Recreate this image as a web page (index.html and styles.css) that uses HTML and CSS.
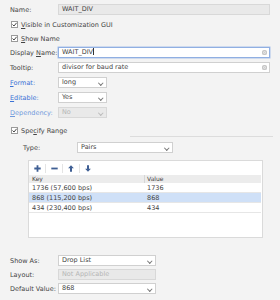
FILE: index.html
```html
<!DOCTYPE html>
<html lang="en">
<head>
    <meta charset="UTF-8">
    <title>Variable Properties</title>
    <link rel="stylesheet" href="styles.css">
</head>
<body>
    <div class="form">
        <div class="row">
            <span class="lbl">Name:</span>
            <div class="field disabled">WAIT_DIV</div>
        </div>
        <div class="row check-row">
            <span class="check"><svg width="7" height="7" viewBox="0 0 7 7"><path d="M1.5 3.5 L3 5 L5.6 1.8" fill="none" stroke="#444" stroke-width="1"/></svg></span>
            <span><u>V</u>isible in Customization GUI</span>
        </div>
        <div class="row check-row tight">
            <span class="check"><svg width="7" height="7" viewBox="0 0 7 7"><path d="M1.5 3.5 L3 5 L5.6 1.8" fill="none" stroke="#444" stroke-width="1"/></svg></span>
            <span><u>S</u>how Name</span>
        </div>
        <div class="row tight">
            <span class="lbl">Display <u>N</u>ame:</span>
            <div class="field focus">WAIT_DIV<span class="caret"></span><span class="clear"></span></div>
        </div>
        <div class="row">
            <span class="lbl">Tooltip:</span>
            <div class="field">divisor for baud rate<span class="clear"></span></div>
        </div>
        <div class="row">
            <span class="lbl link"><u>F</u>ormat:</span>
            <div class="combo small">long<span class="chev"></span></div>
        </div>
        <div class="row">
            <span class="lbl link"><u>E</u>ditable:</span>
            <div class="combo small">Yes<span class="chev"></span></div>
        </div>
        <div class="row">
            <span class="lbl link dim"><u>D</u>ependency:</span>
            <div class="combo small disabled">No<span class="chev"></span></div>
        </div>

        <div class="row check-row range-head">
            <span class="check"><svg width="7" height="7" viewBox="0 0 7 7"><path d="M1.5 3.5 L3 5 L5.6 1.8" fill="none" stroke="#444" stroke-width="1"/></svg></span>
            <span>Spe<u>c</u>ify Range</span>
        </div>
        <div class="separator"></div>

        <div class="row type-row">
            <span class="lbl wide">Type:</span>
            <div class="combo mid">Pairs<span class="chev"></span></div>
        </div>

        <div class="range-panel">
            <div class="toolbar">
                <span class="tool"><svg width="7" height="7" viewBox="0 0 7 7"><path d="M3.5 0.3 V6.7 M0.3 3.5 H6.7" stroke="#3f5f94" stroke-width="1.8"/></svg></span>
                <span class="tool"><svg width="7" height="7" viewBox="0 0 7 7"><path d="M0.3 3.5 H6.7" stroke="#3f5f94" stroke-width="1.8"/></svg></span>
                <span class="tool"><svg width="6" height="7" viewBox="0 0 6 7"><path d="M3 0.2 L5.9 3.3 H4 V6.8 H2 V3.3 H0.1 Z" fill="#3f5f94"/></svg></span>
                <span class="tool last"><svg width="6" height="7" viewBox="0 0 6 7"><path d="M3 6.8 L5.9 3.7 H4 V0.2 H2 V3.7 H0.1 Z" fill="#3f5f94"/></svg></span>
            </div>
            <div class="grid-head">
                <span class="col-key">Key</span>
                <span class="col-val">Value</span>
            </div>
            <div class="grid-row">
                <span class="col-key">1736 (57,600 bps)</span>
                <span class="col-val">1736</span>
            </div>
            <div class="grid-row selected">
                <span class="col-key">868 (115,200 bps)</span>
                <span class="col-val">868</span>
            </div>
            <div class="grid-row">
                <span class="col-key">434 (230,400 bps)</span>
                <span class="col-val">434</span>
            </div>
        </div>

        <div class="row show-row">
            <span class="lbl">Show As:</span>
            <div class="combo big">Drop List<span class="chev"></span></div>
        </div>
        <div class="row tight">
            <span class="lbl">Layout:</span>
            <div class="combo big disabled">Not Applicable</div>
        </div>
        <div class="row tight">
            <span class="lbl">Default Value:</span>
            <div class="combo big">868<span class="chev"></span></div>
        </div>
    </div>
</body>
</html>
```

FILE: styles.css
```css
body {
    margin: 0;
    background-color: #f3f3f3;
    font-family: "DejaVu Sans", sans-serif;
    font-size: 6.5px;
    color: #444;
}

u {
    text-decoration: underline;
    text-underline-offset: 1px;
}

.form {
    padding: 4px 10px 0 10px;
    height: 296px;
    overflow: hidden;
}

.row {
    display: flex;
    align-items: center;
    height: 11px;
    margin-top: 4px;
}

.row:first-child {
    margin-top: 0;
}

.row.tight {
    margin-top: 3px;
}

.lbl {
    width: 48px;
    flex-shrink: 0;
    white-space: nowrap;
}

.lbl.wide {
    width: 54px;
}

.lbl.link {
    color: #3a72d6;
}

.lbl.dim {
    color: #7199dc;
}

.check-row {
    padding-left: 1px;
}

.check {
    width: 7px;
    height: 7px;
    box-sizing: border-box;
    border: 1px solid #9a9a9a;
    background-color: #fff;
    margin-right: 3px;
    display: flex;
}

.check svg {
    margin: -1px;
}

.field,
.combo {
    position: relative;
    box-sizing: border-box;
    height: 11px;
    line-height: 9px;
    padding-left: 3px;
    background-color: #fff;
    border: 1px solid #d0d0d0;
    white-space: nowrap;
}

.field {
    flex: 1;
}

.field.disabled {
    background-color: #e9e9e9;
    border-color: #d8d8d8;
}

.field.focus {
    border-color: #90afe2;
    box-shadow: 0 0 0 0.5px #aac2ea;
}

.caret {
    display: inline-block;
    width: 1px;
    height: 7px;
    background-color: #333;
    vertical-align: -1px;
}

.clear {
    position: absolute;
    right: 2px;
    top: 2px;
    width: 5px;
    height: 5px;
    border-radius: 50%;
    background-color: #c4c4c4;
    box-shadow: inset 0 0 0 1.2px #c4c4c4, inset 0 0 0 2px #eee;
}

.combo.small {
    width: 49px;
}

.combo.mid {
    width: 96px;
}

.combo.big {
    width: 98px;
}

.combo.disabled {
    background-color: #e9e9e9;
    border-color: #d8d8d8;
    color: #b5b5b5;
}

.chev {
    position: absolute;
    right: 4px;
    top: 3px;
    width: 2.5px;
    height: 2.5px;
    border-right: 1px solid #777;
    border-bottom: 1px solid #777;
    transform: rotate(45deg);
}

.combo.disabled .chev {
    border-color: #bbb;
}

.range-head {
    margin-top: 7px;
}

.separator {
    height: 1px;
    margin-left: 120px;
    margin-right: -3px;
    background-color: #dcdcdc;
}

.type-row {
    margin-top: 5px;
    padding-left: 13px;
}

.range-panel {
    margin-top: 7px;
    margin-left: 18px;
    width: 235px;
    height: 78px;
    box-sizing: border-box;
    background-color: #fff;
    border: 1px solid #dadada;
}

.toolbar {
    display: flex;
    align-items: center;
    height: 14px;
}

.tool {
    width: 16px;
    height: 9px;
    display: flex;
    align-items: center;
    justify-content: center;
    border-right: 1px solid #e4e4e4;
}

.tool.last {
    border-right: none;
}

.grid-head,
.grid-row {
    display: flex;
    margin-right: 1px;
}

.grid-head {
    height: 8px;
    line-height: 8px;
    background-color: #ececec;
    font-size: 6px;
}

.grid-head .col-key {
    border-right: 1px solid #d6d6d6;
}

.grid-row {
    height: 10px;
    line-height: 10px;
    border-bottom: 1px solid #e6e6e6;
    box-sizing: border-box;
}

.grid-row.selected {
    background-color: #cfe0f7;
}

.col-key {
    width: 116px;
    padding-left: 3px;
    box-sizing: border-box;
}

.col-val {
    padding-left: 2px;
}

.show-row {
    margin-top: 17px;
}
```
